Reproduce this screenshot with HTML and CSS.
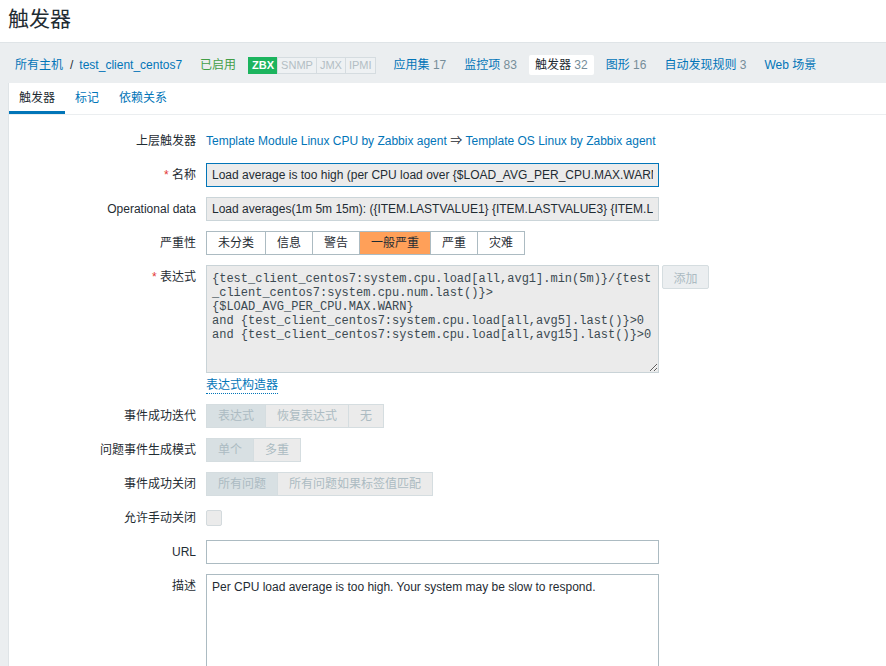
FILE: index.html
```html
<!DOCTYPE html>
<html lang="zh">
<head>
<meta charset="utf-8">
<title>触发器</title>
<link rel="stylesheet" href="styles.css">
</head>
<body>
<header class="page-header"><h1>触发器</h1></header>
<nav class="host-nav">
  <div class="nav-item crumbs"><a href="#">所有主机</a><span class="sep">/</span><a href="#">test_client_centos7</a></div>
  <div class="nav-item status-on">已启用</div>
  <div class="badges"><span class="badge on">ZBX</span><span class="badge">SNMP</span><span class="badge">JMX</span><span class="badge">IPMI</span></div>
  <div class="nav-item"><a href="#">应用集</a> <span class="count">17</span></div>
  <div class="nav-item"><a href="#">监控项</a> <span class="count">83</span></div>
  <div class="nav-item active"><span class="cur">触发器</span> <span class="count">32</span></div>
  <div class="nav-item"><a href="#">图形</a> <span class="count">16</span></div>
  <div class="nav-item"><a href="#">自动发现规则</a> <span class="count">3</span></div>
  <div class="nav-item"><a href="#">Web 场景</a></div>
</nav>
<main class="content">
  <ul class="tabs">
    <li class="tab active">触发器</li>
    <li class="tab"><a href="#">标记</a></li>
    <li class="tab"><a href="#">依赖关系</a></li>
  </ul>
  <div class="form">
    <div class="label">上层触发器</div>
    <div class="field text"><a href="#">Template Module Linux CPU by Zabbix agent</a>&nbsp;⇒&nbsp;<a href="#">Template OS Linux by Zabbix agent</a></div>

    <div class="label"><span class="req">*</span> 名称</div>
    <div class="field"><input class="inp ro focus" readonly value="Load average is too high (per CPU load over {$LOAD_AVG_PER_CPU.MAX.WARN} for 5m)"></div>

    <div class="label">Operational data</div>
    <div class="field"><input class="inp ro" readonly value="Load averages(1m 5m 15m): ({ITEM.LASTVALUE1} {ITEM.LASTVALUE3} {ITEM.LASTVALUE4})"></div>

    <div class="label">严重性</div>
    <div class="field"><div class="seg"><span>未分类</span><span>信息</span><span>警告</span><span class="avg">一般严重</span><span>严重</span><span>灾难</span></div></div>

    <div class="label"><span class="req">*</span> 表达式</div>
    <div class="field stack">
      <div class="expr-row"><textarea class="expr" readonly>{test_client_centos7:system.cpu.load[all,avg1].min(5m)}/{test
_client_centos7:system.cpu.num.last()}&gt;
{$LOAD_AVG_PER_CPU.MAX.WARN}
and {test_client_centos7:system.cpu.load[all,avg5].last()}&gt;0
and {test_client_centos7:system.cpu.load[all,avg15].last()}&gt;0</textarea><button class="btn-add" disabled>添加</button></div>
      <a href="#" class="builder">表达式构造器</a>
    </div>

    <div class="label">事件成功迭代</div>
    <div class="field"><div class="seg disabled"><span class="on">表达式</span><span>恢复表达式</span><span>无</span></div></div>

    <div class="label">问题事件生成模式</div>
    <div class="field"><div class="seg disabled"><span class="on">单个</span><span>多重</span></div></div>

    <div class="label">事件成功关闭</div>
    <div class="field"><div class="seg disabled"><span class="on">所有问题</span><span>所有问题如果标签值匹配</span></div></div>

    <div class="label">允许手动关闭</div>
    <div class="field"><span class="checkbox"></span></div>

    <div class="label">URL</div>
    <div class="field"><input class="inp" value=""></div>

    <div class="label">描述</div>
    <div class="field stack"><textarea class="desc">Per CPU load average is too high. Your system may be slow to respond.</textarea></div>
  </div>
</main>
</body>
</html>
```
FILE: styles.css
```css
* { box-sizing: border-box; }
html, body { margin: 0; padding: 0; }
body {
  font: 12px/1.2 "Liberation Sans", Arial, "Noto Sans CJK SC", sans-serif;
  color: #1f2c33;
  background: #ebeef0;
  overflow: hidden;
}
a { color: #0275b8; text-decoration: none; }

.page-header {
  background: #fff;
  height: 43px;
  border-bottom: 1px solid #dfe4e7;
  padding: 0 8px;
}
.page-header h1 {
  margin: 0;
  font-size: 21px;
  font-weight: normal;
  line-height: 38px;
  color: #1f2c33;
}

.host-nav {
  display: flex;
  align-items: center;
  gap: 6px;
  height: 40px;
  padding: 12px 0 8px 9px;
  white-space: nowrap;
}
.nav-item { padding: 0 6px; height: 20px; line-height: 20px; }
.nav-item.active { background: #fff; border-radius: 2px; }
.crumbs .sep { margin: 0 6px 0 7px; color: #1f2c33; }
.count { color: #768d99; }
.status-on { color: #429e47; }
.badges { display: flex; margin-right: 6px; }
.badge {
  font-size: 11px;
  line-height: 15px;
  padding: 0 3px;
  border: 1px solid #d5dce0;
  background: #eef1f3;
  color: #b3bec4;
  margin-left: -1px;
}
.badge:first-child { margin-left: 0; }
.badge.on {
  background: #1cb45e;
  border-color: #1cb45e;
  color: #fff;
  font-weight: bold;
}

.content {
  margin-left: 8px;
  background: #fff;
  border-left: 1px solid #dfe4e7;
  height: 700px;
}
.tabs {
  display: flex;
  list-style: none;
  margin: 0;
  padding: 0;
  height: 32px;
  border-bottom: 1px solid #ebeef0;
}
.tab { padding: 0 10px; line-height: 31px; height: 31px; }
.tab.active { box-shadow: inset 0 -3px 0 #0275b8; color: #1f2c33; }

.form {
  display: grid;
  grid-template-columns: 187px 1fr;
  column-gap: 10px;
  row-gap: 10px;
  padding-top: 14px;
}
.label {
  text-align: right;
  line-height: 24px;
  white-space: nowrap;
}
.req { color: #e33734; }
.field { min-height: 24px; display: flex; align-items: center; }
.field.text { line-height: 24px; white-space: nowrap; }
.field.stack { display: block; }

.inp {
  width: 453px;
  height: 24px;
  padding: 0 5px;
  border: 1px solid #acbbc2;
  background: #fff;
  font: 12px "Liberation Sans", Arial, "Noto Sans CJK SC", sans-serif;
  color: #1f2c33;
  margin: 0;
  outline: none;
}
.inp.ro { background: #ebebeb; border-color: #cbd5d9; }
.inp.ro.focus { border-color: #0275b8; }

.seg { display: flex; }
.seg span {
  height: 24px;
  line-height: 22px;
  padding: 0 11px;
  border: 1px solid #acbbc2;
  background: #fff;
  margin-left: -1px;
  white-space: nowrap;
}
.seg span:first-child { margin-left: 0; }
.seg span.avg { background: #ffa059; }
.seg.disabled span {
  background: #ebebeb;
  border-color: #d5dde0;
  color: #acbbc2;
}
.seg.disabled span.on { background: #d8e0e3; }

.expr-row { display: flex; align-items: flex-start; }
.expr {
  display: block;
  width: 453px;
  height: 108px;
  margin: 0;
  padding: 6px 5px 4px;
  border: 1px solid #c9d3d7;
  background: #ebebeb;
  font: 12px/14px "Liberation Mono", "Courier New", monospace;
  color: #3b4a52;
  white-space: pre;
  overflow: hidden;
  outline: none;
}
.btn-add {
  margin: 0 0 0 3px;
  width: 47px;
  height: 24px;
  border: 1px solid #d5dde0;
  background: #ebeef0;
  color: #acbbc2;
  font: 12px "Liberation Sans", Arial, "Noto Sans CJK SC", sans-serif;
  padding: 0;
  border-radius: 2px;
}
.builder {
  display: inline-block;
  margin-top: 5px;
  line-height: 15px;
  border-bottom: 1px dotted #0275b8;
}

.checkbox {
  display: block;
  width: 16px;
  height: 16px;
  border: 1px solid #d3dadd;
  background: #ebebeb;
  border-radius: 2px;
}

.desc {
  display: block;
  width: 453px;
  height: 150px;
  margin: 0;
  padding: 5px 5px;
  border: 1px solid #acbbc2;
  background: #fff;
  font: 12px/14px "Liberation Sans", Arial, "Noto Sans CJK SC", sans-serif;
  color: #1f2c33;
  resize: none;
  outline: none;
}
```
